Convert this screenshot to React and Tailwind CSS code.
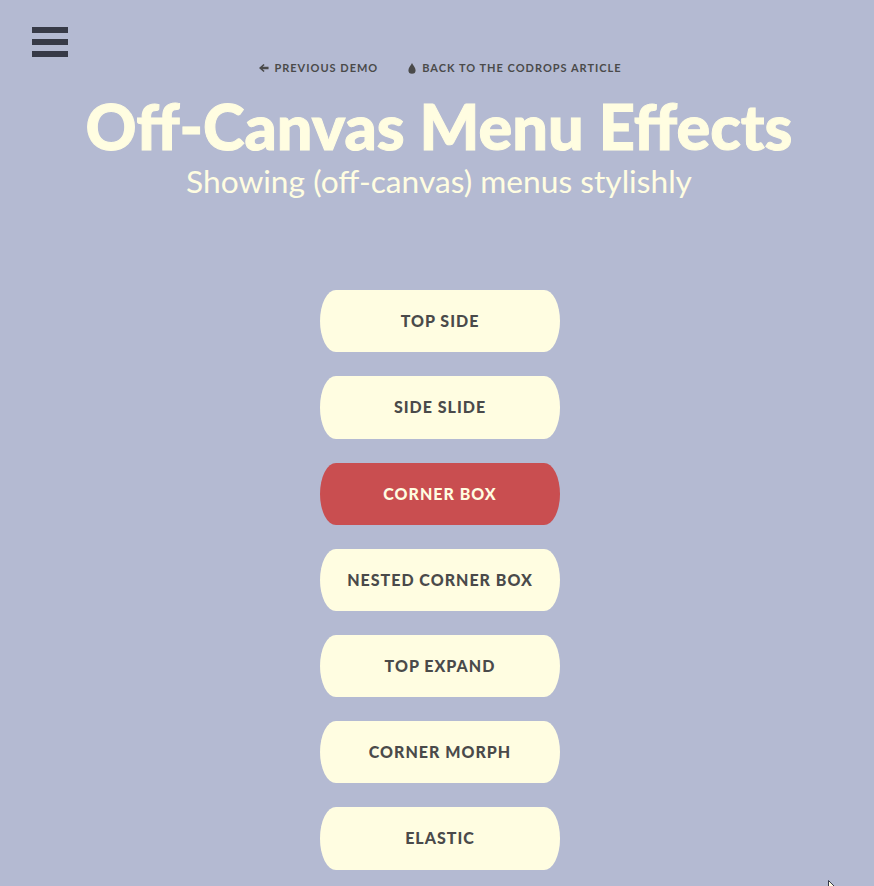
import React from "react";
const items = ["TOP SIDE","SIDE SLIDE","CORNER BOX","NESTED CORNER BOX","TOP EXPAND","CORNER MORPH","ELASTIC"];
export default function App(){
  return (
    <div className="relative w-[874px] h-[886px] overflow-hidden bg-[#b4bad2] font-['Lato',sans-serif]">
      <button className="absolute left-[32px] top-[27px] w-[36px] h-[30px] flex flex-col justify-between">
        <span className="block h-[6px] bg-[#373a47]"></span>
        <span className="block h-[6px] bg-[#373a47]"></span>
        <span className="block h-[6px] bg-[#373a47]"></span>
      </button>
      <header className="flex flex-col items-center w-[878px] pt-[61px]">
        <nav className="flex items-center gap-[30px] ml-[3px] h-[14px] text-[11px] font-bold tracking-[1px] text-[#4a4a4a]">
          <span className="flex items-center gap-[5px]">
            <svg width="10" height="10" viewBox="0 0 11 10" className="text-[#4a4a4a]"><path d="M0 5 L5 0.5 L6.2 1.8 L4 3.6 H10.5 V6.4 H4 L6.2 8.2 L5 9.5 Z" fill="currentColor"/></svg>
            PREVIOUS DEMO
          </span>
          <span className="flex items-center gap-[6px]">
            <svg width="8" height="11" viewBox="0 0 8 11" className="text-[#4a4a4a]"><path d="M4 0 C4.6 2 7.6 4.6 7.6 7.2 A3.6 3.6 0 0 1 0.4 7.2 C0.4 4.6 3.4 2 4 0 Z" fill="currentColor"/></svg>
            BACK TO THE CODROPS ARTICLE
          </span>
        </nav>
        <h1 className="mt-[18px] text-[63px] leading-[66px] font-black text-[#fffde1] [-webkit-text-stroke:1px_#fffde1]">Off-Canvas Menu Effects</h1>
        <p className="mt-[4px] text-[31.7px] leading-[36px] font-normal text-[#fffde1]">Showing (off-canvas) menus stylishly</p>
      </header>
      <div className="mt-[91.2px] ml-[320px] flex flex-col gap-[24px] w-[240px]">
        {items.map(t=>(
          <button key={t} className={`h-[62.2px] rounded-[16px/31px] text-[16px] font-black tracking-[1px] ${t==="CORNER BOX"?"bg-[#c94e50] text-[#fffde1]":"bg-[#fffde1] text-[#4a4a4a]"}`}>{t}</button>
        ))}
      </div>
      <svg className="absolute left-[828px] top-[880px]" width="10" height="16" viewBox="0 0 10 16"><path d="M0.5 0.5 V13 L3.5 10 L5.5 15 L7.5 14 L5.5 9.5 H9.5 Z" fill="#fffde1" stroke="#373a47" strokeWidth="1"/></svg>
    </div>
  );
}
